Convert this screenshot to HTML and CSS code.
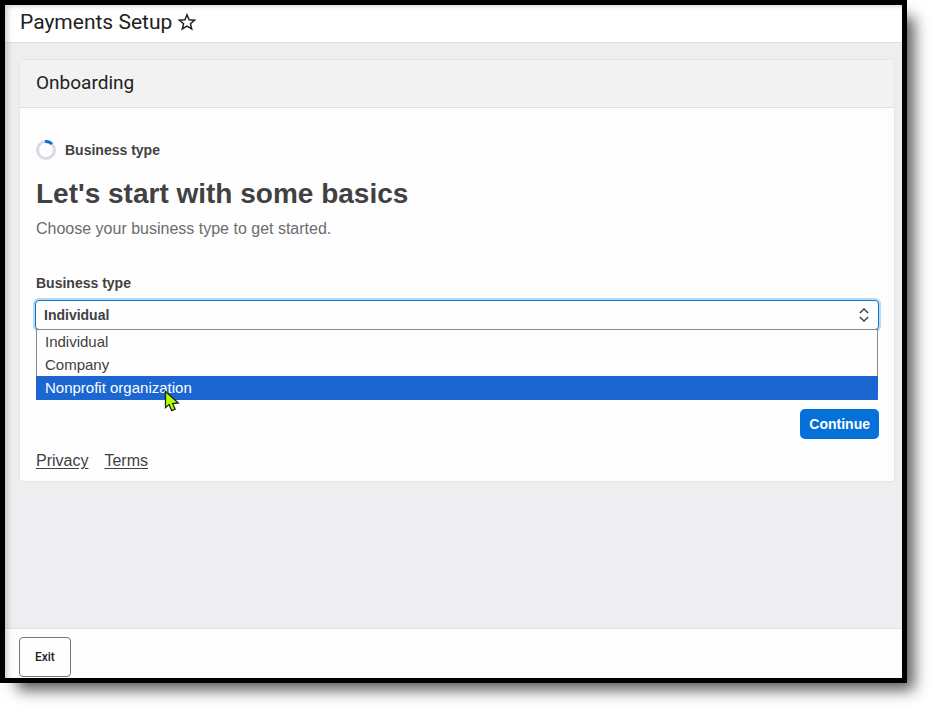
FILE: index.html
```html
<!DOCTYPE html>
<html lang="en">
<head>
<meta charset="utf-8">
<title>Payments Setup</title>
<link rel="stylesheet" href="styles.css">
</head>
<body>
<div class="window">
  <header class="topbar">
    <h1 class="page-title">Payments Setup</h1>
    <button class="favorite" type="button" aria-label="Add to favorites">
      <svg width="18" height="18" viewBox="0 0 18 18" fill="none" stroke="#222" stroke-width="1.5" stroke-linejoin="miter"><path d="M9 1.800l2.100 5 5.400.400-4.100 3.500 1.300 5.300L9 13.200 4.300 16l1.300-5.300L1.500 7.200l5.400-.4z"/></svg>
    </button>
  </header>
  <main class="content">
    <section class="card">
      <h2 class="card-title">Onboarding</h2>
      <form class="card-body">
        <div class="step">
          <svg width="20" height="20" viewBox="0 0 20 20" fill="none" stroke-width="3"><circle cx="10" cy="10" r="8.500" stroke="#d8dbe2"/><path d="M9 1.560A8.500 8.500 0 0 1 16 4" stroke="#0b72d4"/></svg>
          <span>Business type</span>
        </div>
        <h3 class="heading">Let's start with some basics</h3>
        <p class="lead">Choose your business type to get started.</p>
        <label class="label" for="business-type">Business type</label>
        <div class="picker">
          <select class="select" id="business-type">
            <option selected>Individual</option>
            <option>Company</option>
            <option>Nonprofit organization</option>
          </select>
          <svg class="chevrons" width="10" height="14" viewBox="0 0 10 14" fill="none" stroke="#414552" stroke-width="1.500"><path d="M.8 5L5 1l4.200 4M.8 9L5 13l4.200-4"/></svg>
          <ul class="menu" role="listbox" aria-label="Business type">
            <li class="option" role="option">Individual</li>
            <li class="option" role="option">Company</li>
            <li class="option active" role="option" aria-selected="true">Nonprofit organization
              <svg class="pointer" width="16" height="22" viewBox="0 0 16 22"><path d="M1.500 1.500v16.200l3.600-3.100 2.600 6 3.400-1.500-2.500-5.600 5.700-.6z" fill="#b8ff00" stroke="#1c2b10" stroke-width="1.300"/></svg>
            </li>
          </ul>
        </div>
        <button class="continue" type="button">Continue</button>
        <nav class="links"><a href="#privacy">Privacy</a><a href="#terms">Terms</a></nav>
      </form>
    </section>
  </main>
  <footer class="footer"><button class="exit" type="button">Exit</button></footer>
</div>
</body>
</html>
```
FILE: styles.css
```css
* { box-sizing: border-box; }

body {
  margin: 0;
  padding: 0 25px 25px 0;
  background: #fff;
  color: #414143;
  font: 14px/20px "Liberation Sans", sans-serif;
}

h1, h2, h3, p, ul { margin: 0; padding: 0; }

.window {
  position: relative;
  display: flex;
  flex-direction: column;
  min-height: calc(100vh - 25px);
  border: 5px solid #000;
  background: #eeeef0;
  box-shadow: 12px 12px 14px -5px rgba(0, 0, 0, 0.65);
}

/* Soft shade along the top and left edges of the window */
.window::after {
  content: "";
  position: absolute;
  inset: 0;
  box-shadow: inset 4px 2px 6px -2px rgba(0, 0, 0, 0.22);
  pointer-events: none;
}

.topbar {
  display: flex;
  align-items: center;
  gap: 6px;
  height: 38px;
  padding: 0 15px 3px;
  border-bottom: 1px solid #e0e0e3;
  background: #fff;
}

.page-title {
  color: #222;
  font: 400 21px/28px Roboto, sans-serif;
}

.favorite {
  display: flex;
  padding: 0;
  border: 0;
  background: none;
}

.content {
  flex: 1;
  padding: 16px 7px 16px 14px;
}

.card {
  border: 1px solid #e5e5e8;
  border-radius: 4px;
  background: #fefefe;
}

.card-title {
  padding: 9px 16px 10px;
  border-bottom: 1px solid #dedfe1;
  border-radius: 4px 4px 0 0;
  background: #f2f2f3;
  color: #222;
  font: 400 19px/28px Roboto, sans-serif;
}

.card-body {
  display: flex;
  flex-direction: column;
  padding: 32px 15px 10px 16px;
}

.step {
  display: flex;
  align-items: center;
  gap: 9px;
  font-weight: 700;
}

.heading {
  margin-top: 16px;
  font-size: 28px;
  line-height: 36px;
}

.lead {
  margin: 7px 0 34px;
  color: #6c6c6e;
  font-size: 16px;
}

.label { font-weight: 700; }

.picker {
  position: relative;
  margin: 7px 0 79px -1px;
}

.select {
  display: block;
  width: 100%;
  height: 30px;
  padding: 0 8px;
  appearance: none;
  border: 1px solid #0b78d8;
  border-radius: 4px;
  outline: 0;
  background: #fefefe;
  box-shadow: 0 0 0 2px #b9d8f2;
  color: #414143;
  font: 700 14px/20px "Liberation Sans", sans-serif;
}

.chevrons {
  position: absolute;
  top: 8px;
  right: 10px;
  pointer-events: none;
}

.menu {
  position: absolute;
  top: 29px;
  right: 1px;
  left: 1px;
  border: 1px solid #8a8a8c;
  border-bottom-color: #1b66d1;
  background: #fefefe;
  list-style: none;
}

.option {
  height: 23px;
  padding: 0 8px;
  font-size: 15px;
  line-height: 23px;
}

.option.active {
  position: relative;
  margin: 0 -1px;
  padding: 0 9px;
  background: #1b66d1;
  color: #fff;
}

.pointer {
  position: absolute;
  top: 14px;
  left: 128px;
  z-index: 1;
}

.continue {
  align-self: flex-end;
  height: 30px;
  padding: 0 9px;
  border: 0;
  border-radius: 5px;
  background: #0570d8;
  color: #fff;
  font: 700 14px/20px "Liberation Sans", sans-serif;
}

.links {
  display: flex;
  gap: 16px;
  margin-top: 12px;
  font-size: 16px;
}

.links a {
  color: #414143;
  text-underline-offset: 2px;
}

.footer {
  height: 50px;
  padding: 8px 14px 2px;
  border-top: 1px solid #e2e2e4;
  background: #fefefe;
}

.exit {
  height: 40px;
  padding: 0 15px;
  border: 1px solid #77777b;
  border-radius: 4px;
  background: #fefefe;
  color: #222;
  font: 500 12px/16px Roboto, sans-serif;
}
```
